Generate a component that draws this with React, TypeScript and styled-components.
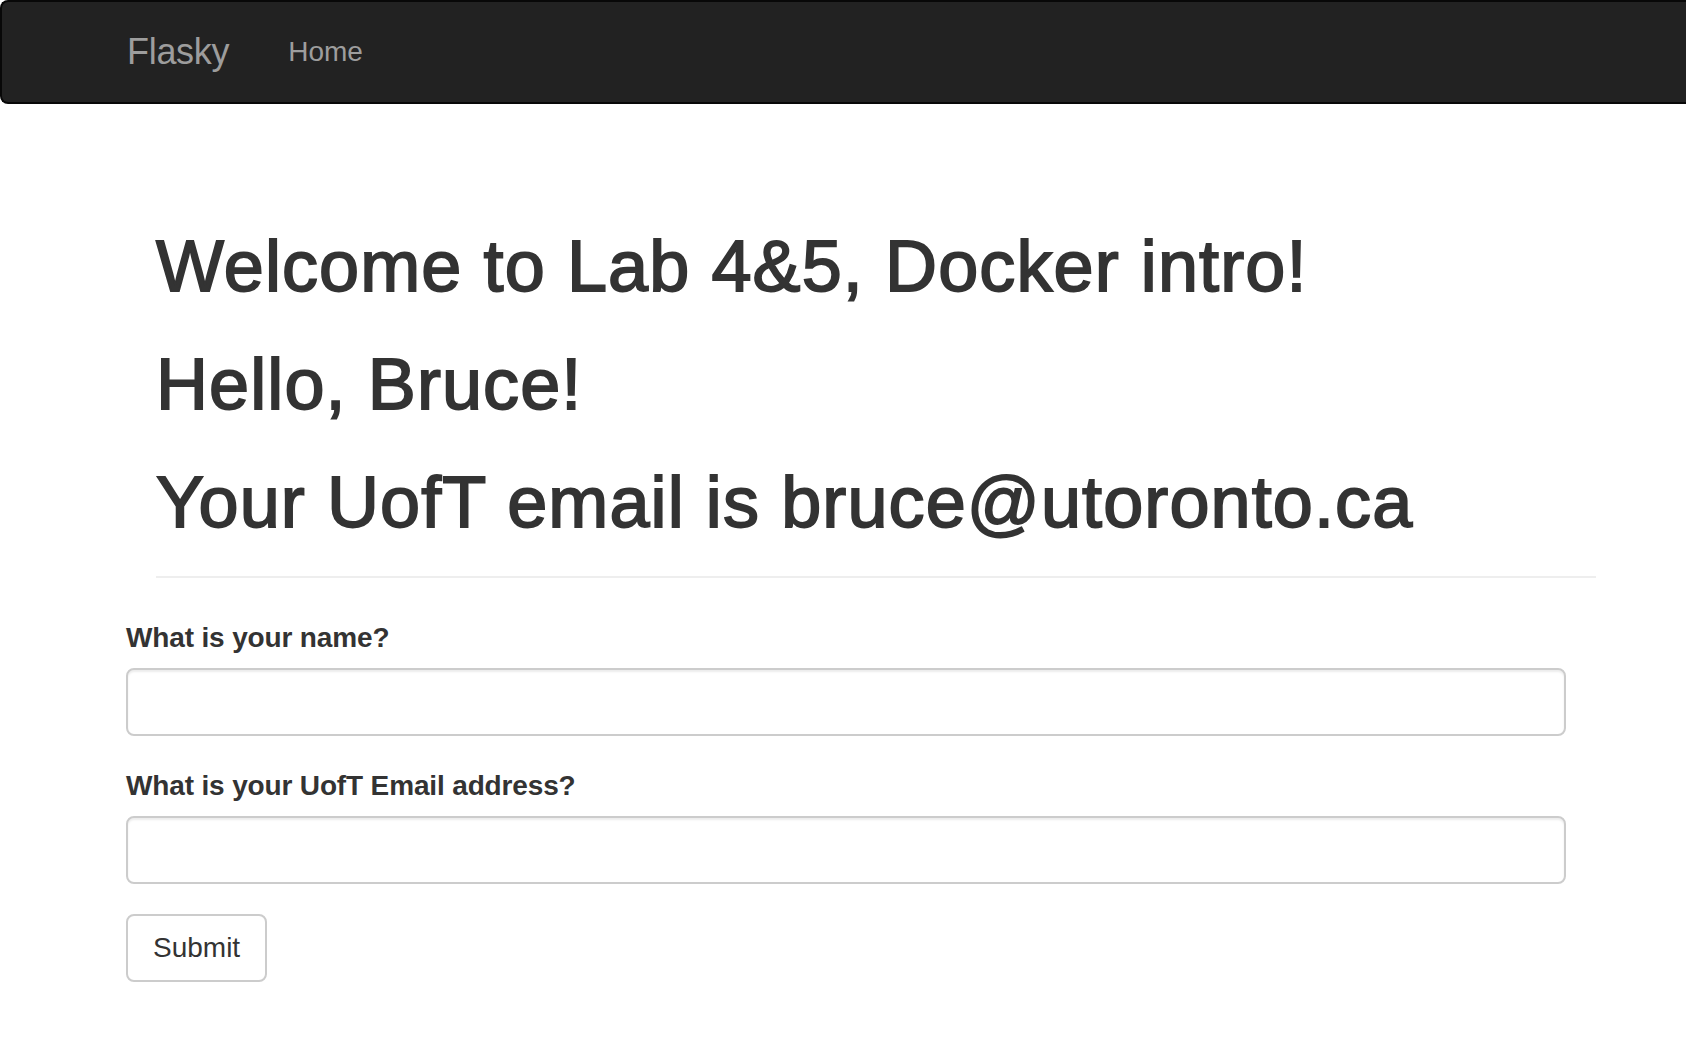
import React from "react";
import styled, { createGlobalStyle } from "styled-components";

const GlobalStyle = createGlobalStyle`
  html, body {
    margin: 0;
    padding: 0;
    background: #ffffff;
  }
  body {
    font-family: "Liberation Sans", Arial, Helvetica, sans-serif;
    color: #333333;
    overflow: hidden;
  }
  * {
    box-sizing: border-box;
  }
`;

const Navbar = styled.nav`
  height: 104px;
  background: #222222;
  border: 2px solid #080808;
  border-right: none;
  border-radius: 8px 0 0 8px;
  display: flex;
  align-items: center;
  padding-left: 95px;
`;

const Brand = styled.a`
  font-size: 36px;
  line-height: 40px;
  padding: 30px 28px 30px 30px;
  color: #9d9d9d;
  text-decoration: none;
  letter-spacing: -0.3px;
`;

const NavLink = styled.a`
  font-size: 28px;
  line-height: 40px;
  padding: 30px 30px 30px 31px;
  color: #9d9d9d;
  text-decoration: none;
`;

const Container = styled.main`
  width: 1440px;
  margin-left: 126px;
`;

const PageHeader = styled.header`
  width: 1440px;
  margin: 123px 0 0 30px;
  padding-bottom: 34px;
  border-bottom: 2px solid #eeeeee;
  display: flex;
  flex-direction: column;
  gap: 39px;
`;

const Heading = styled.h1`
  margin: 0;
  font-size: 72px;
  line-height: 79px;
  font-weight: 400;
  color: #333333;
  letter-spacing: 1.1px;
  -webkit-text-stroke: 1.8px #333333;
`;

const Form = styled.form`
  margin-top: 40px;
  display: flex;
  flex-direction: column;
  align-items: flex-start;
`;

const FormGroup = styled.div`
  width: 100%;
  margin-bottom: 30px;
`;

const Label = styled.label`
  display: block;
  font-size: 28px;
  line-height: 40px;
  font-weight: 700;
  margin-bottom: 10px;
  color: #333333;
  letter-spacing: -0.15px;
`;

const Input = styled.input`
  display: block;
  width: 100%;
  height: 68px;
  padding: 12px 24px;
  font-size: 28px;
  font-family: inherit;
  color: #555555;
  background: #ffffff;
  border: 2px solid #cccccc;
  border-radius: 8px;
  box-shadow: inset 0 2px 2px rgba(0, 0, 0, 0.075);
  outline: none;
`;

const Button = styled.button`
  font-family: inherit;
  font-size: 28px;
  line-height: 40px;
  padding: 12px 25px;
  color: #333333;
  background: #ffffff;
  border: 2px solid #cccccc;
  border-radius: 8px;
  cursor: pointer;
`;

export default function App() {
  return (
    <>
      <GlobalStyle />
      <Navbar>
        <Brand href="#">Flasky</Brand>
        <NavLink href="#">Home</NavLink>
      </Navbar>
      <Container>
        <PageHeader>
          <Heading>Welcome to Lab 4&amp;5, Docker intro!</Heading>
          <Heading>Hello, Bruce!</Heading>
          <Heading>Your UofT email is bruce@utoronto.ca</Heading>
        </PageHeader>
        <Form onSubmit={(e) => e.preventDefault()}>
          <FormGroup>
            <Label htmlFor="name">What is your name?</Label>
            <Input id="name" type="text" />
          </FormGroup>
          <FormGroup>
            <Label htmlFor="email">What is your UofT Email address?</Label>
            <Input id="email" type="text" />
          </FormGroup>
          <Button type="submit">Submit</Button>
        </Form>
      </Container>
    </>
  );
}
